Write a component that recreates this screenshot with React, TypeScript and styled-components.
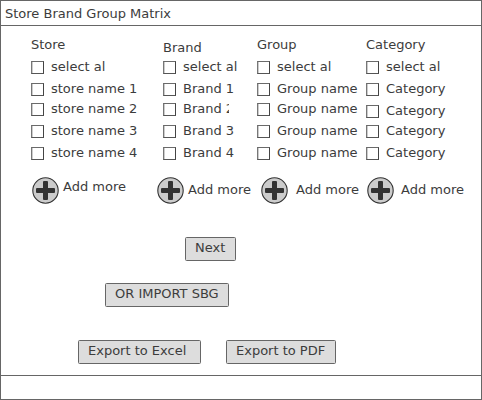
import React from "react";
import styled, { createGlobalStyle } from "styled-components";

const Global = createGlobalStyle`
  * { box-sizing: border-box; }
  body { margin: 0; background: #fff; }
`;

const Window = styled.main`
  width: 482px;
  height: 400px;
  display: flex;
  flex-direction: column;
  border: 1px solid #666;
  background: #fff;
  color: #3c3c3c;
  font: 13px/14px "DejaVu Sans", sans-serif;
  white-space: nowrap;
  overflow: hidden;
`;

const TitleBar = styled.header`
  height: 25px;
  flex: none;
  padding: 6px 0 0 4px;
  border-bottom: 1px solid #666;
`;

const Content = styled.section`
  flex: 1;
`;

const StatusBar = styled.footer`
  height: 24px;
  flex: none;
  border-top: 1px solid #666;
`;

const Matrix = styled.div`
  display: grid;
  grid-template-columns: 132px 94px 109px 115px;
  height: 211px;
  padding-left: 30px;
`;

const Column = styled.div`
  display: flex;
  flex-direction: column;
`;

const Heading = styled.h2<{ $drop: number }>`
  height: 35px;
  margin: 0;
  padding-top: ${(p) => 12 + p.$drop}px;
  font: inherit;
`;

const Option = styled.label<{ $height: number }>`
  display: flex;
  align-items: flex-start;
  height: ${(p) => p.$height}px;
  flex: none;
`;

const Box = styled.span`
  width: 13px;
  height: 13px;
  margin-right: 7px;
  border: 1px solid;
  border-color: #6a6a6a #444 #555 #777;
  box-shadow: inset 1px 0 0 #ccc;
`;

const OptionText = styled.span<{ $clip?: number }>`
  margin-top: -1px;
  width: ${(p) => (p.$clip ? `${p.$clip}px` : "auto")};
  overflow: ${(p) => (p.$clip ? "hidden" : "visible")};
`;

const AddButton = styled.button<{ $shift: number; $gap: number; $lift: number }>`
  display: flex;
  align-items: flex-start;
  gap: ${(p) => p.$gap}px;
  margin: 0 0 0 ${(p) => p.$shift}px;
  padding: 0;
  border: 0;
  background: none;
  color: inherit;
  font: inherit;

  span {
    margin-top: ${(p) => 6 - p.$lift}px;
  }
`;

const Actions = styled.div<{ $height: number; $left: number }>`
  display: flex;
  gap: 25px;
  height: ${(p) => p.$height}px;
  padding-left: ${(p) => p.$left}px;
`;

const Button = styled.button<{ $width: number }>`
  width: ${(p) => p.$width}px;
  height: 24px;
  padding: 0 0 2px 9px;
  border: 1px solid #666;
  border-radius: 1.5px;
  background: #ddd;
  color: inherit;
  font: inherit;
  text-align: left;
`;

const PlusIcon = () => (
  <svg width="27" height="27" viewBox="0 0 27 27">
    <circle cx="13.5" cy="13.5" r="12.7" fill="#ccc" stroke="#333" strokeWidth="1.1" />
    <rect x="11" y="4" width="5" height="19" rx="1" fill="#333" />
    <rect x="4" y="11" width="19" height="5" rx="1" fill="#333" />
  </svg>
);

type Item = { text: string; height: number; clip?: number };
type Group = { title: string; drop: number; items: Item[]; shift: number; gap: number; lift: number };

const rows = (labels: string[], heights = [20, 22, 22, 30]): Item[] => [
  { text: "select al", height: 22 },
  ...labels.map((text, i) => ({ text, height: heights[i] })),
];

const groups: Group[] = [
  { title: "Store", drop: 0, items: rows(["store name 1", "store name 2", "store name 3", "store name 4"]), shift: 1, gap: 4, lift: 3 },
  {
    title: "Brand",
    drop: 3,
    items: rows(["Brand 1", "Brand 2", "Brand 3", "Brand 4"]).map((r) =>
      r.text === "Brand 2" ? { ...r, clip: 46 } : r
    ),
    shift: -6,
    gap: 4,
    lift: 0,
  },
  { title: "Group", drop: 0, items: rows(["Group name", "Group name", "Group name", "Group name"]), shift: 4, gap: 8, lift: 0 },
  { title: "Category", drop: 0, items: rows(["Category", "Category", "Category", "Category"], [22, 20, 22, 30]), shift: 1, gap: 7, lift: 0 },
];

export default function App() {
  return (
    <>
      <Global />
      <Window>
        <TitleBar>Store Brand Group Matrix</TitleBar>
        <Content>
          <Matrix>
            {groups.map((g) => (
              <Column key={g.title}>
                <Heading $drop={g.drop}>{g.title}</Heading>
                {g.items.map((item, i) => (
                  <Option key={i} $height={item.height}>
                    <Box />
                    <OptionText $clip={item.clip}>{item.text}</OptionText>
                  </Option>
                ))}
                <AddButton $shift={g.shift} $gap={g.gap} $lift={g.lift}>
                  <PlusIcon />
                  <span>Add more</span>
                </AddButton>
              </Column>
            ))}
          </Matrix>
          <Actions $height={46} $left={184}>
            <Button $width={51}>Next</Button>
          </Actions>
          <Actions $height={57} $left={104}>
            <Button $width={124}>OR IMPORT SBG</Button>
          </Actions>
          <Actions $height={24} $left={77}>
            <Button $width={123}>Export to Excel</Button>
            <Button $width={110}>Export to PDF</Button>
          </Actions>
        </Content>
        <StatusBar />
      </Window>
    </>
  );
}
